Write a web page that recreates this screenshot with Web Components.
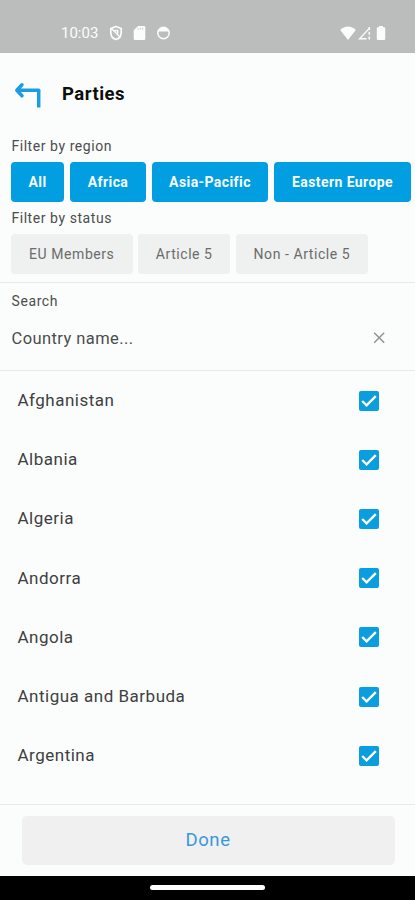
<!DOCTYPE html>
<html lang="en">
<head>
<meta charset="utf-8">
<title>Parties</title>
<style>
html,body{margin:0;height:100%;overflow:hidden}
body{font-family:Roboto,"Liberation Sans",sans-serif;background:#fbfdfc}
</style>
</head>
<body>
<parties-app></parties-app>
<script>
const define = (name, html) => customElements.define(name, class extends HTMLElement {
  constructor() {
    super();
    this.attachShadow({ mode: 'open' }).innerHTML = html;
  }
});

define('status-bar', `
<style>
:host{display:flex;box-sizing:border-box;height:52.5px;flex:none;background:#bbbdbc;color:#fbfcfc;padding:13px 29px 0 61px;align-items:center;justify-content:space-between;font-size:15px;line-height:20px}
.left,.right{display:flex;align-items:center}
svg{display:block;fill:none;stroke:#fbfcfc}
</style>
<div class="left"><span>10:03</span>
<svg style="margin-left:11px" width="14" height="16" viewBox="0 0 14 16"><path d="M7 1.500 12.200 3.500V8c0 3.200-2.200 5.500-5.200 6.500C4 13.500 1.800 11.200 1.800 8V3.500z" stroke-width="1.700"/><path d="M2.500 3.500 11.500 12.500M5.500 5.500h3.200v3" stroke-width="1.400"/></svg>
<svg style="margin-left:10px" width="13" height="16" viewBox="0 0 13 16"><path d="M5 1h6a1.300 1.300 0 0 1 1.300 1.300v11.400A1.300 1.300 0 0 1 11 15H2a1.300 1.300 0 0 1-1.300-1.300V5.300z" fill="#fbfcfc" stroke="none"/><path d="M5 2.600v2.200M7.400 2.600v2.200M9.800 2.600v2.200" stroke="#bbbdbc" stroke-width=".7"/></svg>
<svg style="margin-left:9.500px" width="15" height="16" viewBox="0 0 15 16"><circle cx="7.500" cy="8" r="5.700" stroke-width="1.500"/><path d="M2.500 6.500C3.200 3.500 5 2.300 7.500 2.300s4.300 1.200 5 4.200z" fill="#fbfcfc" stroke="none"/></svg>
</div>
<div class="right">
<svg width="16" height="16" viewBox="0 0 16 16"><path d="M8 15 .2 5C2.200 2.600 5 1.400 8 1.400S13.800 2.600 15.800 5z" fill="#fbfcfc" stroke="none"/></svg>
<svg style="margin-left:1px" width="15" height="16" viewBox="0 0 15 16"><path d="M9.500 13.800H2.600L12 3.600" stroke-width="1.400"/><path d="M12.300 2V15" stroke-width="1.500" stroke-dasharray="3 1.700"/></svg>
<svg style="margin-left:4.500px" width="10" height="16" viewBox="0 0 10 16"><path d="M3 1h4v1.200h1.200a1 1 0 0 1 1 1V14a1 1 0 0 1-1 1H1.800a1 1 0 0 1-1-1V3.200a1 1 0 0 1 1-1H3z" fill="#fbfcfc" stroke="none"/></svg>
</div>`);

define('page-header', `
<style>
:host{display:flex;box-sizing:border-box;align-items:center;height:81px;flex:none;padding:2px 0 0 14px;color:#0c0d0d;font-weight:700;font-size:18.500px;letter-spacing:.5px}
svg{display:block;margin:3px 20px 0 0}
</style>
<svg width="28" height="28" viewBox="0 0 28 28" fill="none" stroke="#1c9ce2" stroke-width="3.500" stroke-linecap="round" stroke-linejoin="round"><path d="M8 2.800 2.800 8.300 8 13.800M3.500 8.300H24.700" /><path d="M24.700 8.300V25.500" stroke-linecap="butt"/></svg>
<slot></slot>`);

define('filter-group', `
<style>
:host{display:block}
.label{font-size:14px;line-height:24px;height:28px;letter-spacing:.56px;color:#4b4d4c;padding-left:11.400px}
.chips{display:flex;gap:var(--gap,6px);padding-left:11px;height:40px}
</style>
<div class="label"><slot name="label"></slot></div><div class="chips"><slot></slot></div>`);

define('filter-chip', `
<style>
:host{display:flex;flex:none;align-items:center;justify-content:center;box-sizing:border-box;width:var(--w);height:40px;border-radius:4px;background:#eff0f0;color:#6a6c6b;font-size:14px;letter-spacing:.56px;white-space:nowrap}
:host([active]){background:#019ee2;color:#f7fcff;font-weight:700;letter-spacing:.42px}
</style><slot></slot>`);

define('search-field', `
<style>
:host{display:block;box-sizing:border-box;height:89px;flex:none;border-top:1px solid #e9ebea;border-bottom:1px solid #e9ebea;padding:6px 29px 0 11.500px}
.label{font-size:14px;line-height:24px;letter-spacing:.6px;color:#4b4d4c}
.row{display:flex;align-items:center;justify-content:space-between;height:50px;font-size:16.500px;letter-spacing:.42px;color:#4b4d4c}
svg{display:block}
</style>
<div class="label"><slot name="label"></slot></div>
<div class="row"><slot></slot><svg width="14" height="14" viewBox="0 0 14 14" stroke="#8f9190" stroke-width="1.400"><path d="m2.200 1.700 10 10M12.200 1.700 2.200 11.700"/></svg></div>`);

define('country-row', `
<style>
:host{display:flex;align-items:center;justify-content:space-between;height:59.200px;padding:0 36px 0 17.500px;font-size:17px;letter-spacing:.5px;color:#3e403f}
span{padding-bottom:1px}
svg{display:block}
</style>
<span><slot></slot></span><svg width="20" height="20" viewBox="0 0 20 20"><rect width="20" height="20" rx="2" fill="#0a9de0"/><path d="m3.200 10 4.400 4.300 9.200-9.100" fill="none" stroke="#fff" stroke-width="2.400"/></svg>`);

define('bottom-bar', `
<style>
:host{display:block;box-sizing:border-box;height:71.500px;flex:none;border-top:1px solid #e9ebea;padding:11px 20px 0 22px}
.button{display:flex;box-sizing:border-box;align-items:center;justify-content:center;height:49px;padding:0 1px 2px 0;border-radius:5px;background:#f0f0f0;color:#3899da;font-size:18.500px;letter-spacing:.6px}
</style><div class="button"><slot></slot></div>`);

define('nav-handle', `
<style>
:host{display:flex;justify-content:center;height:24.500px;flex:none;background:#000}
i{display:block;width:115px;height:5px;border-radius:3px;background:#fff;margin-top:9.500px}
</style><i></i>`);

define('parties-app', `
<style>
:host{display:flex;flex-direction:column;width:415px;height:900px;overflow:hidden}
.filters{height:148.500px;flex:none}
filter-group+filter-group{margin-top:4px;--gap:5.700px}
main{flex:1;min-height:0;overflow:hidden}
</style>
<status-bar></status-bar>
<page-header>Parties</page-header>
<div class="filters">
<filter-group><span slot="label">Filter by region</span>
<filter-chip active style="--w:53px">All</filter-chip><filter-chip active style="--w:76px">Africa</filter-chip><filter-chip active style="--w:116px">Asia-Pacific</filter-chip><filter-chip active style="--w:137px">Eastern Europe</filter-chip></filter-group>
<filter-group><span slot="label">Filter by status</span>
<filter-chip style="--w:121.500px">EU Members</filter-chip><filter-chip style="--w:92px">Article 5</filter-chip><filter-chip style="--w:132px">Non - Article 5</filter-chip></filter-group>
</div>
<search-field><span slot="label">Search</span>Country name...</search-field>
<main>
<country-row>Afghanistan</country-row><country-row>Albania</country-row><country-row>Algeria</country-row><country-row>Andorra</country-row><country-row>Angola</country-row><country-row>Antigua and Barbuda</country-row><country-row>Argentina</country-row>
</main>
<bottom-bar>Done</bottom-bar>
<nav-handle></nav-handle>`);
</script>
</body>
</html>
